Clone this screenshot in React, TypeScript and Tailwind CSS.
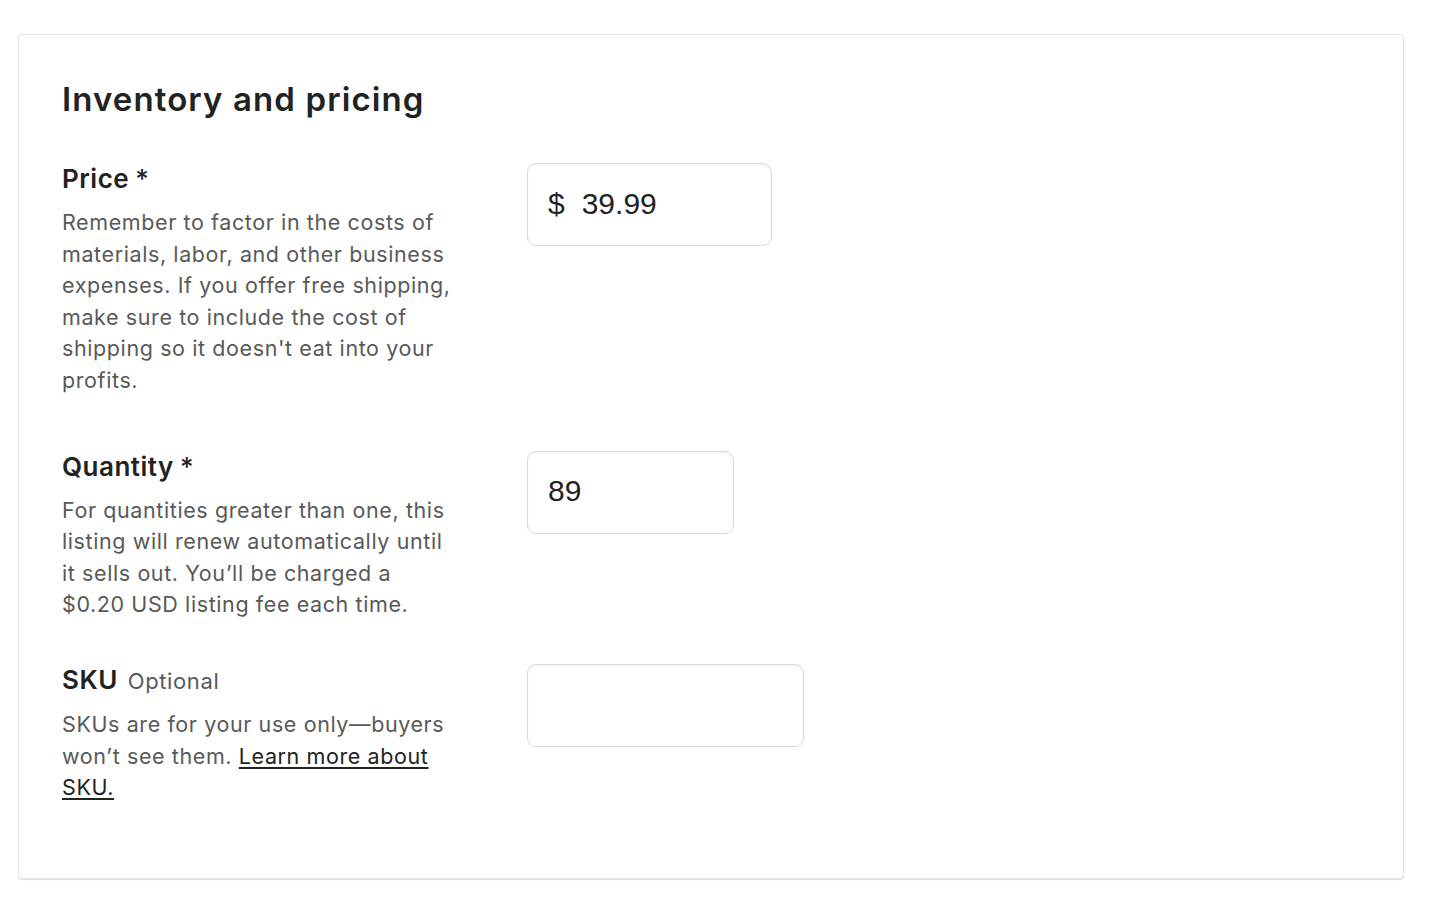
const font = { fontFamily: "Inter, 'Noto Sans', sans-serif" };

function Row({
  label,
  extra,
  children,
  input,
  className,
}: {
  label: string;
  extra?: React.ReactNode;
  children: React.ReactNode;
  input: React.ReactNode;
  className?: string;
}) {
  return (
    <div className={"flex " + (className ?? "")}>
      <div className="w-[393px] shrink-0">
        <div className="flex items-baseline gap-[10px] text-[26px] leading-[32px] font-semibold text-[#222222] tracking-[0.5px]">
          <span>{label}</span>
          {extra}
        </div>
        <p className="mt-[12px] text-[21.5px] leading-[31.6px] text-[#595959] tracking-[0.6px]">
          {children}
        </p>
      </div>
      <div className="ml-[72px]">{input}</div>
    </div>
  );
}

function Field({ width, children }: { width: string; children?: React.ReactNode }) {
  return (
    <div
      className={
        "h-[83px] rounded-[9px] border border-[#d9d9d9] bg-white shadow-[inset_0_1px_2px_rgba(0,0,0,0.06)] flex items-center px-[20px] pb-[3px] text-[30px] text-[#222222] " +
        width
      }
      style={{ fontFamily: "'Liberation Sans', Arial, sans-serif" }}
    >
      {children}
    </div>
  );
}

export default function App() {
  return (
    <div className="min-h-screen bg-white pt-[34px] pl-[18px]" style={font}>
      <div className="w-[1386px] rounded-[4px] border border-[#e2e2e2] shadow-[0_1px_1px_rgba(0,0,0,0.12)] bg-white px-[43px] pt-[44px] pb-[74px]">
        <h2 className="text-[33px] leading-[40px] font-semibold text-[#222222] tracking-[1.1px]">
          Inventory and pricing
        </h2>

        <Row
          className="mt-[44px]"
          label="Price"
          extra={<span className="-ml-[4px] font-medium">*</span>}
          input={
            <Field width="w-[245px]">
              <span>$</span>
              <span className="ml-[17px]">39.99</span>
            </Field>
          }
        >
          Remember to factor in the costs of materials, labor, and other business
          expenses. If you offer free shipping, make sure to include the cost of
          shipping so it doesn't eat into your profits.
        </Row>

        <Row
          className="mt-[54px]"
          label="Quantity"
          extra={<span className="-ml-[4px] font-medium">*</span>}
          input={<Field width="w-[207px]">89</Field>}
        >
          For quantities greater than one, this listing will renew automatically
          until it sells out. You’ll be charged a $0.20 USD listing fee each time.
        </Row>

        <Row
          className="mt-[43px]"
          label="SKU"
          extra={
            <span className="text-[22px] font-normal text-[#595959] tracking-[0.6px]">Optional</span>
          }
          input={<Field width="w-[277px]" />}
        >
          SKUs are for your use only—buyers won’t see them.{" "}
          <a href="#" className="text-[#222222] underline underline-offset-[3px]">
            Learn more about SKU.
          </a>
        </Row>
      </div>
    </div>
  );
}
